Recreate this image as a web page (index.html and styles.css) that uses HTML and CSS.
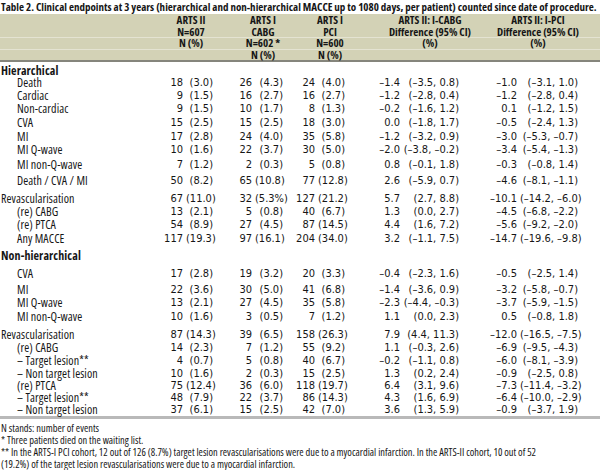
FILE: index.html
```html
<!DOCTYPE html>
<html>
<head>
<meta charset="utf-8">
<link rel="stylesheet" href="styles.css">
</head>
<body>
<div class="page">
  <div class="title">Table 2. Clinical endpoints at 3 years (hierarchical and non-hierarchical MACCE up to 1080 days, per patient) counted since date of procedure.</div>
  <div class="band">
    <div class="hrow">
      <span></span><span>ARTS II</span><span>ARTS I</span><span>ARTS I</span><span>ARTS II: I-CABG</span><span>ARTS II: I-PCI</span><span></span>
    </div>
    <div class="hrow">
      <span></span><span>N=607</span><span>CABG</span><span>PCI</span><span>Difference (95% CI)</span><span>Difference (95% CI)</span><span></span>
    </div>
    <div class="hrow sep">
      <span></span><span>N (%)</span><span>N=602 *</span><span>N=600</span><span>(%)</span><span>(%)</span><span></span>
    </div>
    <div class="hrow sep lastrow">
      <span></span><span></span><span>N (%)</span><span>N (%)</span><span></span><span></span><span></span>
    </div>
  </div>
  <table class="tbl">
    <colgroup>
      <col class="c-label">
      <col class="c-a2n"><col class="c-a2p">
      <col class="c-cbn"><col class="c-cbp">
      <col class="c-pcn"><col class="c-pcp">
      <col class="c-d1v"><col class="c-d1c">
      <col class="c-d2v"><col class="c-d2c">
      <col class="c-fill">
    </colgroup>
    <tbody>
      <tr class="sect first"><td colspan="12">Hierarchical</td></tr>
      <tr><td class="ind">Death</td><td class="n">18</td><td class="p">(3.0)</td><td class="n">26</td><td class="p">(4.3)</td><td class="n">24</td><td class="p">(4.0)</td><td class="v">–1.4</td><td class="ci">(–3.5, 0.8)</td><td class="v">–1.0</td><td class="ci">(–3.1, 1.0)</td><td></td></tr>
      <tr><td class="ind">Cardiac</td><td class="n">9</td><td class="p">(1.5)</td><td class="n">16</td><td class="p">(2.7)</td><td class="n">16</td><td class="p">(2.7)</td><td class="v">–1.2</td><td class="ci">(–2.8, 0.4)</td><td class="v">–1.2</td><td class="ci">(–2.8, 0.4)</td><td></td></tr>
      <tr><td class="ind">Non-cardiac</td><td class="n">9</td><td class="p">(1.5)</td><td class="n">10</td><td class="p">(1.7)</td><td class="n">8</td><td class="p">(1.3)</td><td class="v">–0.2</td><td class="ci">(–1.6, 1.2)</td><td class="v">0.1</td><td class="ci">(–1.2, 1.5)</td><td></td></tr>
      <tr class="g1"><td class="ind">CVA</td><td class="n">15</td><td class="p">(2.5)</td><td class="n">15</td><td class="p">(2.5)</td><td class="n">18</td><td class="p">(3.0)</td><td class="v">0.0</td><td class="ci">(–1.8, 1.7)</td><td class="v">–0.5</td><td class="ci">(–2.4, 1.3)</td><td></td></tr>
      <tr class="g1"><td class="ind">MI</td><td class="n">17</td><td class="p">(2.8)</td><td class="n">24</td><td class="p">(4.0)</td><td class="n">35</td><td class="p">(5.8)</td><td class="v">–1.2</td><td class="ci">(–3.2, 0.9)</td><td class="v">–3.0</td><td class="ci">(–5.3, –0.7)</td><td></td></tr>
      <tr><td class="ind">MI Q-wave</td><td class="n">10</td><td class="p">(1.6)</td><td class="n">22</td><td class="p">(3.7)</td><td class="n">30</td><td class="p">(5.0)</td><td class="v">–2.0</td><td class="ci">(–3.8, –0.2)</td><td class="v">–3.4</td><td class="ci">(–5.4, –1.3)</td><td></td></tr>
      <tr class="g2"><td class="ind">MI non-Q-wave</td><td class="n">7</td><td class="p">(1.2)</td><td class="n">2</td><td class="p">(0.3)</td><td class="n">5</td><td class="p">(0.8)</td><td class="v">0.8</td><td class="ci">(–0.1, 1.8)</td><td class="v">–0.3</td><td class="ci">(–0.8, 1.4)</td><td></td></tr>
      <tr class="g3"><td class="ind">Death / CVA / MI</td><td class="n">50</td><td class="p">(8.2)</td><td class="n">65</td><td class="p">(10.8)</td><td class="n">77</td><td class="p">(12.8)</td><td class="v">2.6</td><td class="ci">(–5.9, 0.7)</td><td class="v">–4.6</td><td class="ci">(–8.1, –1.1)</td><td></td></tr>
      <tr class="g5"><td>Revascularisation</td><td class="n">67</td><td class="p">(11.0)</td><td class="n">32</td><td class="p">(5.3%)</td><td class="n">127</td><td class="p">(21.2)</td><td class="v">5.7</td><td class="ci">(2.7, 8.8)</td><td class="v">–10.1</td><td class="ci">(–14.2, –6.0)</td><td></td></tr>
      <tr><td class="ind">(re) CABG</td><td class="n">13</td><td class="p">(2.1)</td><td class="n">5</td><td class="p">(0.8)</td><td class="n">40</td><td class="p">(6.7)</td><td class="v">1.3</td><td class="ci">(0.0, 2.7)</td><td class="v">–4.5</td><td class="ci">(–6.8, –2.2)</td><td></td></tr>
      <tr><td class="ind">(re) PTCA</td><td class="n">54</td><td class="p">(8.9)</td><td class="n">27</td><td class="p">(4.5)</td><td class="n">87</td><td class="p">(14.5)</td><td class="v">4.4</td><td class="ci">(1.6, 7.2)</td><td class="v">–5.6</td><td class="ci">(–9.2, –2.0)</td><td></td></tr>
      <tr class="g1"><td class="ind">Any MACCE</td><td class="n">117</td><td class="p">(19.3)</td><td class="n">97</td><td class="p">(16.1)</td><td class="n">204</td><td class="p">(34.0)</td><td class="v">3.2</td><td class="ci">(–1.1, 7.5)</td><td class="v">–14.7</td><td class="ci">(–19.6, –9.8)</td><td></td></tr>
      <tr class="sect g4"><td colspan="12">Non-hierarchical</td></tr>
      <tr class="g5"><td class="ind">CVA</td><td class="n">17</td><td class="p">(2.8)</td><td class="n">19</td><td class="p">(3.2)</td><td class="n">20</td><td class="p">(3.3)</td><td class="v">–0.4</td><td class="ci">(–2.3, 1.6)</td><td class="v">–0.5</td><td class="ci">(–2.5, 1.4)</td><td></td></tr>
      <tr class="g3"><td class="ind">MI</td><td class="n">22</td><td class="p">(3.6)</td><td class="n">30</td><td class="p">(5.0)</td><td class="n">41</td><td class="p">(6.8)</td><td class="v">–1.4</td><td class="ci">(–3.6, 0.9)</td><td class="v">–3.2</td><td class="ci">(–5.8, –0.7)</td><td></td></tr>
      <tr><td class="ind">MI Q-wave</td><td class="n">13</td><td class="p">(2.1)</td><td class="n">27</td><td class="p">(4.5)</td><td class="n">35</td><td class="p">(5.8)</td><td class="v">–2.3</td><td class="ci">(–4.4, –0.3)</td><td class="v">–3.7</td><td class="ci">(–5.9, –1.5)</td><td></td></tr>
      <tr class="g1"><td class="ind">MI non-Q-wave</td><td class="n">10</td><td class="p">(1.6)</td><td class="n">3</td><td class="p">(0.5)</td><td class="n">7</td><td class="p">(1.2)</td><td class="v">1.1</td><td class="ci">(0.0, 2.3)</td><td class="v">0.5</td><td class="ci">(–0.8, 1.8)</td><td></td></tr>
      <tr class="g5"><td>Revascularisation</td><td class="n">87</td><td class="p">(14.3)</td><td class="n">39</td><td class="p">(6.5)</td><td class="n">158</td><td class="p">(26.3)</td><td class="v">7.9</td><td class="ci">(4.4, 11.3)</td><td class="v">–12.0</td><td class="ci">(–16.5, –7.5)</td><td></td></tr>
      <tr><td class="ind">(re) CABG</td><td class="n">14</td><td class="p">(2.3)</td><td class="n">7</td><td class="p">(1.2)</td><td class="n">55</td><td class="p">(9.2)</td><td class="v">1.1</td><td class="ci">(–0.3, 2.6)</td><td class="v">–6.9</td><td class="ci">(–9.5, –4.3)</td><td></td></tr>
      <tr><td class="ind">– Target lesion**</td><td class="n">4</td><td class="p">(0.7)</td><td class="n">5</td><td class="p">(0.8)</td><td class="n">40</td><td class="p">(6.7)</td><td class="v">–0.2</td><td class="ci">(–1.1, 0.8)</td><td class="v">–6.0</td><td class="ci">(–8.1, –3.9)</td><td></td></tr>
      <tr><td class="ind">– Non target lesion</td><td class="n">10</td><td class="p">(1.6)</td><td class="n">2</td><td class="p">(0.3)</td><td class="n">15</td><td class="p">(2.5)</td><td class="v">1.3</td><td class="ci">(0.2, 2.4)</td><td class="v">–0.9</td><td class="ci">(–2.5, 0.8)</td><td></td></tr>
      <tr class="tight"><td class="ind">(re) PTCA</td><td class="n">75</td><td class="p">(12.4)</td><td class="n">36</td><td class="p">(6.0)</td><td class="n">118</td><td class="p">(19.7)</td><td class="v">6.4</td><td class="ci">(3.1, 9.6)</td><td class="v">–7.3</td><td class="ci">(–11.4, –3.2)</td><td></td></tr>
      <tr class="tight"><td class="ind">– Target lesion**</td><td class="n">48</td><td class="p">(7.9)</td><td class="n">22</td><td class="p">(3.7)</td><td class="n">86</td><td class="p">(14.3)</td><td class="v">4.3</td><td class="ci">(1.6, 6.9)</td><td class="v">–6.4</td><td class="ci">(–10.0, –2.9)</td><td></td></tr>
      <tr class="tight last"><td class="ind">– Non target lesion</td><td class="n">37</td><td class="p">(6.1)</td><td class="n">15</td><td class="p">(2.5)</td><td class="n">42</td><td class="p">(7.0)</td><td class="v">3.6</td><td class="ci">(1.3, 5.9)</td><td class="v">–0.9</td><td class="ci">(–3.7, 1.9)</td><td></td></tr>
    </tbody>
  </table>
  <div class="notes">
    <p>N stands: number of events</p>
    <p>* Three patients died on the waiting list.</p>
    <p>** In the ARTS-I PCI cohort, 12 out of 126 (8.7%) target lesion revascularisations were due to a myocardial infarction. In the ARTS-II cohort, 10 out of 52<br>(19.2%) of the target lesion revascularisations were due to a myocardial infarction.</p>
  </div>
</div>
</body>
</html>
```

FILE: styles.css
```css
html, body {
  margin: 0;
  padding: 0;
  background: #ffffff;
}

.page {
  width: 600px;
  font-family: "Open Sans", "Liberation Sans", sans-serif;
  font-stretch: 75%;
  font-size: 12px;
  color: #161616;
}

.title {
  font-size: 11px;
  font-weight: bold;
  line-height: 13px;
  white-space: nowrap;
  padding-left: 1px;
}

/* header band */
.band {
  margin-top: 1px;
  background: #d3d2b6;
}

.hrow {
  display: grid;
  grid-template-columns: 159px 64px 80px 54px 146px 70px 27px;
  height: 11.5px;
  box-sizing: border-box;
  font-weight: bold;
  font-size: 11px;
  line-height: 11.5px;
}

.hrow span {
  display: flex;
  justify-content: center;
  white-space: nowrap;
  min-width: 0;
}

.hrow.sep {
  border-top: 1px solid #e4e3d2;
  line-height: 10.5px;
}

.hrow.lastrow {
  height: 13.5px;
  border-bottom: 2px solid #85857c;
}

/* body table */
.tbl {
  width: 600px;
  border-collapse: separate;
  border-spacing: 0;
  table-layout: fixed;
}

.c-label { width: 158px; }
.c-a2n { width: 28px; }
.c-a2p { width: 27px; }
.c-cbn { width: 42px; }
.c-cbp { width: 28px; }
.c-pcn { width: 35px; }
.c-pcp { width: 27px; }
.c-d1v { width: 58px; }
.c-d1c { width: 56px; }
.c-d2v { width: 61px; }
.c-d2c { width: 58px; }
.c-fill { width: 22px; }

.tbl td {
  padding: 0;
  line-height: 13px;
  white-space: nowrap;
  vertical-align: bottom;
  letter-spacing: 0.1px;
}

.tbl td.n, .tbl td.p, .tbl td.v, .tbl td.ci {
  font-family: "DejaVu Sans Condensed", "DejaVu Sans", sans-serif;
  font-stretch: condensed;
  font-size: 11px;
  letter-spacing: 0;
  text-align: right;
}

.tbl td.n, .tbl td.v { padding-right: 3px; }

.tbl td:first-child { padding-left: 1px; }
.tbl td.ind { padding-left: 17px; }

.tbl tr.sect td { font-weight: bold; }
.tbl tr.first td { padding-top: 3px; line-height: 11px; }

.tbl tr.g1 td { padding-top: 1px; }
.tbl tr.g2 td { padding-top: 2px; }
.tbl tr.g3 td { padding-top: 3px; }
.tbl tr.g4 td { padding-top: 4px; }
.tbl tr.g5 td { padding-top: 5px; }

.tbl tr.tight td { line-height: 12px; }
.tbl tr.last td { border-bottom: 3px solid #b9b9b9; }

.notes {
  padding-top: 3px;
  padding-left: 1px;
  font-size: 10.4px;
}

.notes p {
  margin: 0;
  line-height: 12px;
  white-space: nowrap;
}
```
